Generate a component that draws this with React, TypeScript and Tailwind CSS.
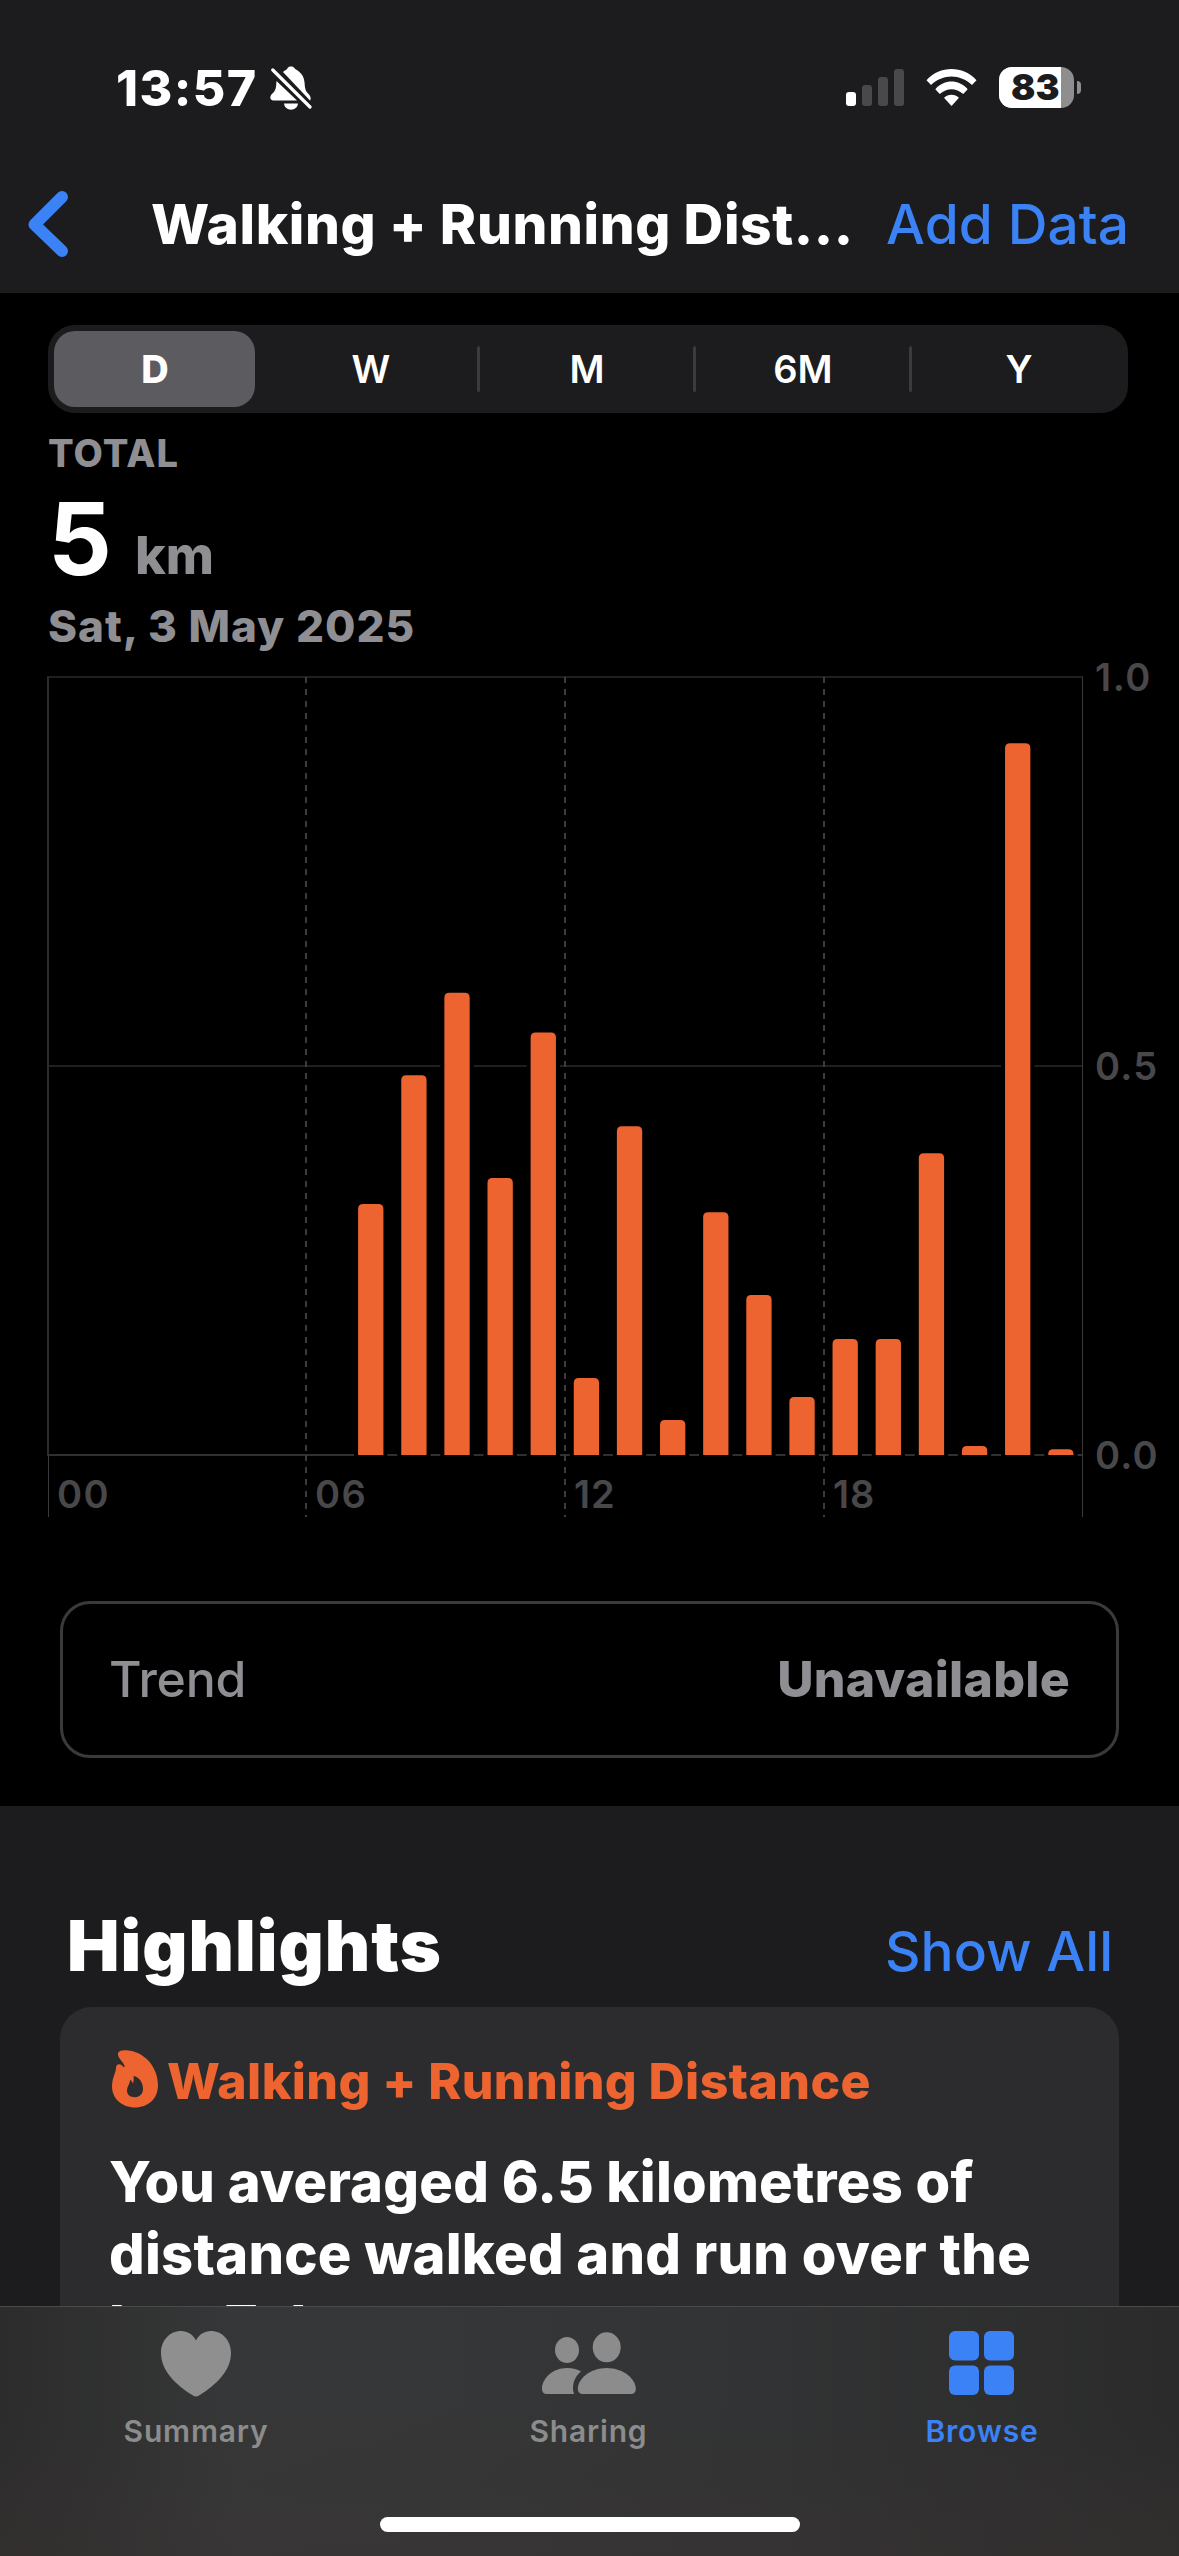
import React from "react";

const F = "font-['Inter',sans-serif]";

// Hourly distance in kilometres, midnight to midnight.
const HOURS = [
  0, 0, 0, 0, 0, 0, 0, 0.3225, 0.488, 0.594, 0.356, 0.543, 0.099, 0.4225, 0.045,
  0.312, 0.2055, 0.0745, 0.149, 0.149, 0.388, 0.0115, 0.915, 0.0075,
];

const TOP = 677;
const BASE = 1455;
const LEFT = 48;
const STEP = 43.13;
const BAR = 25.3;

function StatusBar() {
  return (
    <div className="flex h-[156px] items-start pl-[116px] pr-[98px] pt-[58px]">
      <span className="w-[154px] whitespace-nowrap text-[50px] font-extrabold leading-[60px] tracking-[1.4px] text-white">13:57</span>
      <svg className="mt-[8px]" width="42" height="44" viewBox="0 0 42 44" fill="#fff">
        <path d="M13 6C15 4 17 3.600 17.500 2.200C18.300 -.2 23.700 -.2 24.500 2.200C25.500 4 34 6 34.600 17C35 25 36.500 25.500 39 28.500C41 31 41 33 40 34.500Z" />
        <path d="M6.500 15L27 34.600H3.500C-.5 34.600 -.8 29.800 3 27C6.500 23.500 6 20 6.500 15Z" />
        <path d="M14 37.500H28C27.500 41.500 24.500 43.700 21 43.700S14.500 41.500 14 37.500Z" />
        <path d="M2.800 4L40 41" stroke="#fff" strokeWidth="3.200" strokeLinecap="round" />
      </svg>
      <div className="grow" />
      <svg className="mt-[11px]" width="58" height="37" viewBox="0 0 58 37">
        <rect x="0" y="23" width="10" height="14" rx="3" fill="#fff" />
        <rect x="16" y="16" width="10" height="21" rx="3" fill="#49494b" />
        <rect x="32" y="8" width="10" height="29" rx="3" fill="#49494b" />
        <rect x="48" y="0" width="10" height="37" rx="3" fill="#49494b" />
      </svg>
      <svg className="mt-[11px] ml-[22px]" width="51" height="37" viewBox="0 0 51 37" fill="#fff">
        <path d="M.5 11.200C14 -3.700 37 -3.700 50.500 11.200L46 16C34 4.500 17 4.500 5 16Z" />
        <path d="M9.300 20.200C18.500 10 32.500 10 41.700 20.200L37.200 25C30 18.600 21 18.600 13.800 25Z" />
        <path d="M18 28.800C22 24.600 29 24.600 33 28.800L25.500 37Z" />
      </svg>
      <div className="ml-[22px] mt-[9px] h-[41px] w-[75px] rounded-[13px] bg-[#8e8e8f]">
        <div className="flex h-[41px] w-[62px] items-center rounded-l-[13px] bg-white pl-[12px] text-[36px] font-black leading-[41px] text-[#1c1c1e]">
          83
        </div>
      </div>
      <div className="ml-[3px] mt-[23px] h-[13px] w-[4px] rounded-r-full bg-[#8e8e8f]" />
    </div>
  );
}

function NavBar() {
  return (
    <div className="flex h-[137px] items-start whitespace-nowrap pl-[27px]">
      <svg className="mt-[34px]" width="42" height="68" viewBox="0 0 42 68" fill="none" stroke="#3b82f6" strokeWidth="12" strokeLinecap="round" strokeLinejoin="round">
        <path d="M35 7L7.500 34.500L35 61" />
      </svg>
      <h1 className="ml-[82px] mt-[33px] w-[735px] text-[55px] font-extrabold leading-[70px] tracking-[0.6px] text-white">Walking + Running Dist...</h1>
      <span className="mt-[33px] text-[55px] font-medium leading-[70px] tracking-[0.1px] text-[#3b82f6]">Add Data</span>
    </div>
  );
}

function Segments() {
  const items = ["D", "W", "M", "6M", "Y"];
  return (
    <div className="mx-[48px] mt-[32px] flex h-[88px] w-[1080px] rounded-[27px] bg-[#1c1c1e]">
      {items.map((t, i) => (
        <div key={t} className="relative flex w-[216px] items-center justify-center text-[38px] font-semibold text-white">
          {i === 0 && <div className="absolute left-[6px] top-[6px] h-[76px] w-[201px] rounded-[21px] bg-[#5b5b60]" />}
          <span className={i === 0 ? "relative -left-px font-extrabold" : "relative -left-px"}>{t}</span>
          {i > 0 && i < 4 && <div className="absolute right-0 top-[21px] h-[46px] w-[3px] rounded-full bg-[#3b3b3e]" />}
        </div>
      ))}
    </div>
  );
}

function Chart() {
  return (
    <svg className="block" width="1179" height="870" viewBox="0 651 1179 870">
      <rect x="47" y="676" width="1036" height="2" fill="#1f1f20" />
      <rect x="47" y="1065" width="1036" height="2" fill="#1f1f20" />
      <rect x="47" y="1454" width="1036" height="2" fill="#303032" />
      <rect x="47" y="677" width="2" height="778" fill="#2c2c2e" />
      <rect x="48" y="1455" width="1" height="62" fill="#3a3a3c" />
      <rect x="1082" y="677" width="1" height="840" fill="#3a3a3c" />
      {[306, 565, 824].map((x) => (
        <g key={x} stroke="#3c3c3e" strokeWidth="2" strokeDasharray="6 6">
          <line x1={x} x2={x} y1={TOP} y2={BASE} />
          <line x1={x} x2={x} y1={BASE} y2="1517" />
        </g>
      ))}
      {HOURS.map((v, i) => {
        if (!v) return null;
        const x = LEFT + STEP * i + 8.2;
        const h = v * (BASE - TOP);
        const y = BASE - h;
        const r = Math.min(5, h);
        return (
          <g key={i}>
            <rect x={x - 4} y={y} width={BAR + 8} height={h + 1} fill="#000" />
            <path d={`M${x} ${BASE}V${y + r}Q${x} ${y} ${x + r} ${y}H${x + BAR - r}Q${x + BAR} ${y} ${x + BAR} ${y + r}V${BASE}Z`} fill="#ed6430" />
          </g>
        );
      })}
      <g fill="#48484a" fontSize="38" letterSpacing="0.9" className="font-semibold">
        <text x="1095" y="691" letterSpacing="1.6">1.0</text>
        <text x="1095" y="1080" letterSpacing="1.2">0.5</text>
        <text x="1095" y="1469" letterSpacing="1.2">0.0</text>
        <text x="57" y="1508" letterSpacing="1.5">00</text>
        <text x="315" y="1508" letterSpacing="1.5">06</text>
        <text x="574" y="1508">12</text>
        <text x="833" y="1508">18</text>
      </g>
    </svg>
  );
}

function Total() {
  return (
    <div className="ml-[48px] h-[238px] whitespace-nowrap pt-[17px] font-extrabold text-[#8e8e93]">
      <div className="h-[52px] text-[38px] leading-[46px] tracking-[1.1px]">TOTAL</div>
      <div className="flex h-[114px] items-baseline leading-[114px]">
        <span className="w-[87px] text-[100px] font-bold text-white">5</span>
        <span className="relative -top-px text-[52px]">km</span>
      </div>
      <div className="text-[44px] leading-[60px] tracking-[1px]">Sat, 3 May 2025</div>
    </div>
  );
}

function TabBar() {
  return (
    <div className="absolute inset-x-0 top-[2306px] h-[250px] border-t border-[#4a4a4b] bg-[linear-gradient(90deg,#2c2c2c_0%,#363738_20%,#353637_40%,#323334_65%,#2b2b2b_100%)]">
      <div className="absolute inset-0 bg-[linear-gradient(180deg,transparent_40%,rgba(60,50,50,0.35)_100%)]" />
      <div className="relative -left-px grid h-[150px] grid-cols-3 pt-[22px] text-[30px] font-semibold tracking-[0.8px] text-[#8c8c8c]">
        <div className="flex flex-col items-center">
          <svg width="70" height="68" viewBox="0 0 70 68" fill="#8f8f8f">
            <path d="M35 11.500C38 5.500 43.500 2 50 2C61 2 70 11 70 24C70 42 55 56 38 66.500C36 67.800 34 67.800 32 66.500C15 56 0 42 0 24C0 11 9 2 20 2C26.500 2 32 5.500 35 11.500Z" />
          </svg>
          <span className="mt-[14px] pl-px leading-[40px]">Summary</span>
        </div>
        <div className="flex flex-col items-center">
          <svg width="94" height="68" viewBox="0 0 94 68" fill="#8c8c8c">
            <ellipse cx="25" cy="21" rx="12" ry="13" />
            <ellipse cx="64.700" cy="18.300" rx="14" ry="15" />
            <path d="M0 60C0 50 10 39 25 39C31 39 35.500 40.300 39 42.500C32 48 29.500 57 32 65H5C2 65 0 63 0 60Z" />
            <path d="M35.800 60C35.800 50 48 39 64.700 39S93.800 50 93.800 60C93.800 63 92 65 89 65H41C38 65 35.800 63 35.800 60Z" />
          </svg>
          <span className="mt-[14px] leading-[40px]">Sharing</span>
        </div>
        <div className="flex flex-col items-center text-[#3b82f6]">
          <svg width="65" height="68" viewBox="0 0 65 68" fill="#3b82f6">
            <rect x="0" y="2" width="30" height="29.500" rx="6" />
            <rect x="35" y="2" width="30" height="29.500" rx="6" />
            <rect x="0" y="36.500" width="30" height="29.500" rx="6" />
            <rect x="35" y="36.500" width="30" height="29.500" rx="6" />
          </svg>
          <span className="mt-[14px] pl-px leading-[40px]">Browse</span>
        </div>
      </div>
      <div className="relative mx-auto mt-[60px] h-[15px] w-[420px] rounded-full bg-white" />
    </div>
  );
}

export default function App() {
  return (
    <div className={`relative h-[2556px] w-[1179px] overflow-hidden bg-black antialiased ${F}`}>
      <header className="h-[293px] bg-[#1c1c1e]">
        <StatusBar />
        <NavBar />
      </header>
      <Segments />
      <Total />
      <Chart />
      <div className="mx-[60px] mt-[80px] flex h-[157px] w-[1059px] items-center justify-between rounded-[30px] border-3 border-[#3a3a3c] px-[46px] text-[50px] text-[#8e8e93]">
        <span className="font-medium tracking-[-0.3px]">Trend</span>
        <span className="font-extrabold tracking-[0.25px]">Unavailable</span>
      </div>
      <section className="mt-[48px] h-[750px] whitespace-nowrap bg-[#1c1c1e] px-[60px]">
        <div className="flex h-[201px] items-baseline justify-between pl-[7px] pr-[6px] pt-[95px]">
          <h2 className="text-[70px] font-black leading-[90px] tracking-[1px] text-white">Highlights</h2>
          <span className="text-[55px] font-medium text-[#3b82f6]">Show All</span>
        </div>
        <div className="h-[549px] rounded-t-[32px] bg-[#2c2c2e] pl-[49px] pt-[43px] font-extrabold">
          <div className="flex h-[62px] items-start">
            <svg className="ml-[3px]" width="47" height="58" viewBox="0 0 47 56" preserveAspectRatio="none" fill="#ed6430">
              <path fillRule="evenodd" d="M6 3C8 -1 15 .2 20 1C36 5 46 19 46 34C46 47 36 55.500 23 55.500S0 47 0 35C0 27 4 22 4 17C4 14.500 7 12.500 10 15C11 16 12 17 12.500 16.500C13.500 13 5 8 6 3ZM21.500 25C22 28.500 21.500 31 21 32.500C20.500 31 19.500 29.500 18 29C18 33 15 35.500 15 39C15 43 18 45.500 23 45.500S31 42.500 31 37.500C31 31 27 26 21.500 25Z" />
            </svg>
            <span className="ml-[8px] text-[50px] leading-[62px] tracking-[0.4px] text-[#ed6430]">Walking + Running Distance</span>
          </div>
          <p className="mt-[34px] text-[56px] leading-[72px] tracking-[0.24px] text-white">
            You averaged 6.5 kilometres of<br />distance walked and run over the<br />last 7 days.
          </p>
        </div>
      </section>
      <TabBar />
    </div>
  );
}
